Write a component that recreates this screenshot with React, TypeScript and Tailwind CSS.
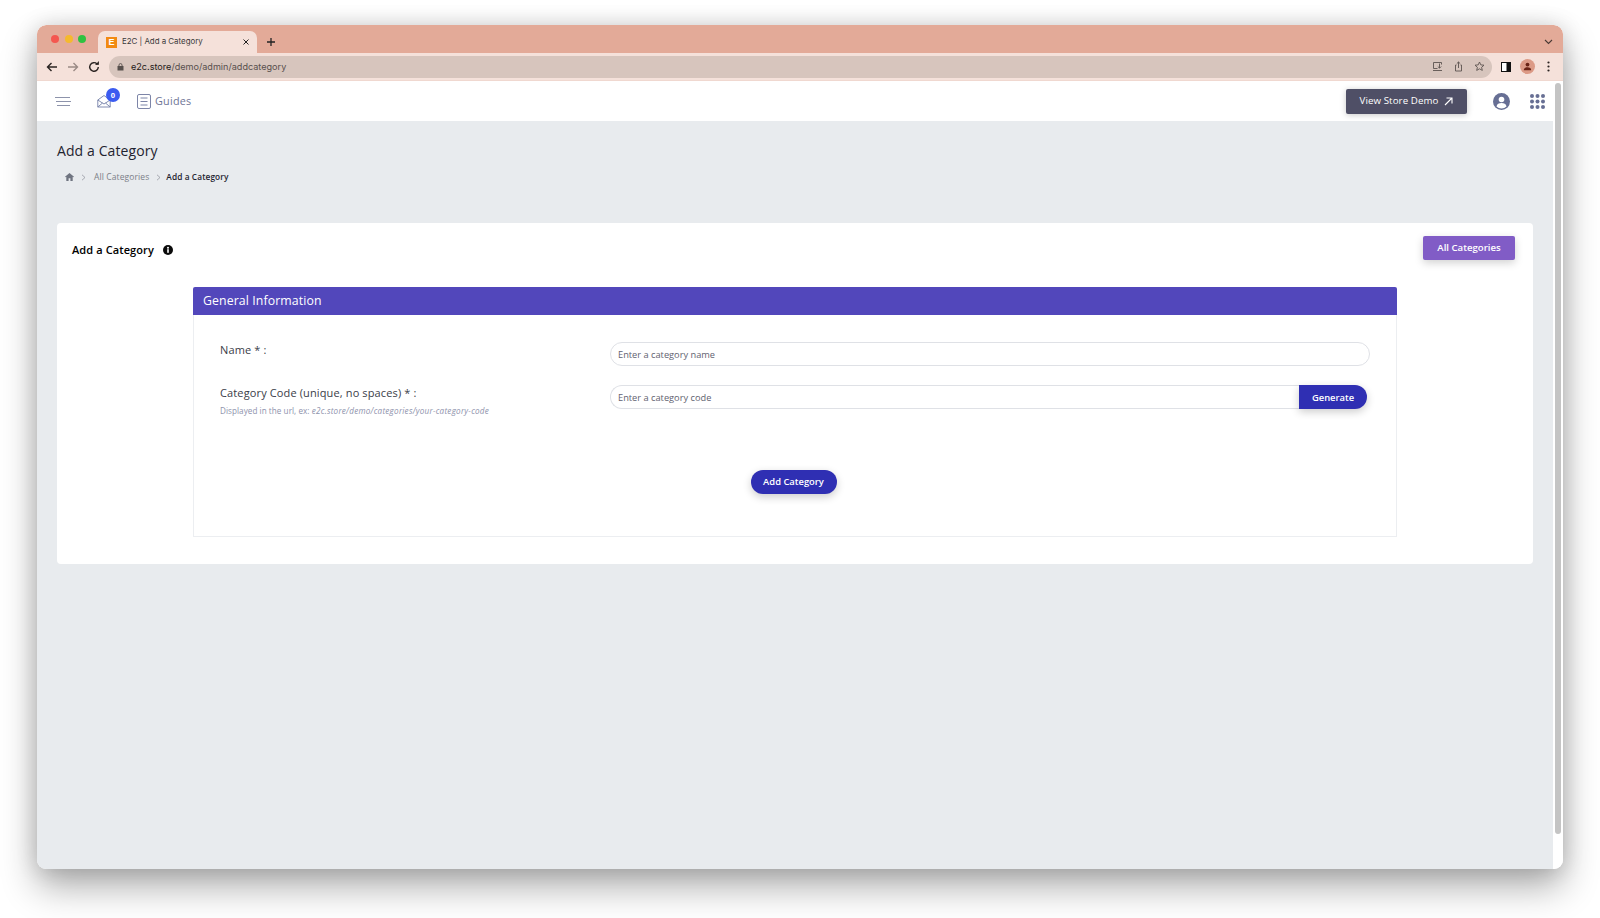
import React from "react";

const Traffic = ({ c }: { c: string }) => <span className="w-2 h-2 rounded-full" style={{ background: c }} />;

function ChromeBars() {
  return (
    <>
      <div className="h-[28px] bg-[#e3aa98] flex items-end shrink-0 rounded-t-[9px]">
        <div className="flex items-center gap-[5.5px] pl-[14px] pr-[12px] self-start pt-[10px]">
          <Traffic c="#f4574f" />
          <Traffic c="#f5b92d" />
          <Traffic c="#2fc240" />
        </div>
        <div className="w-[159px] h-[22px] bg-[#f5e1da] rounded-t-[7px] flex items-center pl-[8px] pr-[7px] font-['Inter',sans-serif] text-[7.9px] text-[#3a3a3a]">
          <span className="w-[11px] h-[11px] bg-[#f28a12] text-white text-[9px] font-bold leading-[11px] text-center font-['Liberation_Sans',sans-serif]">E</span>
          <span className="ml-[5px] flex-1">E2C | Add a Category</span>
          <svg width="8" height="8" viewBox="0 0 8 8" stroke="#222" strokeWidth="1"><path d="M1.500 1.500l5 5M6.500 1.500l-5 5" /></svg>
        </div>
        <svg className="ml-[8px] mb-[5px]" width="12" height="12" viewBox="0 0 12 12" stroke="#222" strokeWidth="1.3"><path d="M6 2v8M2 6h8" /></svg>
        <svg className="ml-auto mr-[10px] mb-[8px]" width="9" height="6" viewBox="0 0 9 6" fill="none" stroke="#4b3a35" strokeWidth="1.1"><path d="M1 1l3.500 3.500L8 1" /></svg>
      </div>
      <div className="h-[28px] bg-[#f5e1da] flex items-center shrink-0 border-b border-b-[#f0d8d0] pl-[8px] pr-[11px]">
        <svg width="14" height="14" viewBox="0 0 14 14" fill="none" stroke="#2b2422" strokeWidth="1.4"><path d="M12 7H2.500M6.500 3L2.500 7l4 4" /></svg>
        <svg className="ml-[7px]" width="14" height="14" viewBox="0 0 14 14" fill="none" stroke="#9a8a85" strokeWidth="1.4"><path d="M2 7h9.500M7.500 3l4 4-4 4" /></svg>
        <svg className="ml-[7px]" width="14" height="14" viewBox="0 0 14 14" fill="none" stroke="#2b2422" strokeWidth="1.4"><path d="M11.300 7a4.300 4.300 0 1 1-1.300-3.100" /><path d="M11.500 1.500v3h-3" fill="#2b2422" strokeWidth="0.8" /></svg>
        <div className="ml-[8px] h-[22px] w-[1383px] bg-[#d7c5bd] rounded-full flex items-center pl-[8px] pr-[7px] font-['Inter',sans-serif] text-[9.1px] text-[#57504d]">
          <svg width="7" height="8" viewBox="0 0 7 8" fill="#57504d"><path d="M1.500 3V2.200a2 2 0 0 1 4 0V3H6.500v4.500h-6V3zM2.400 3h2.200V2.200a1.100 1.100 0 0 0-2.200 0z" /></svg>
          <span className="ml-[7px]"><span className="text-[#1f1a18]">e2c.store</span>/demo/admin/addcategory</span>
          <span className="ml-auto flex items-center gap-[10px]">
            <svg width="11" height="11" viewBox="0 0 11 11" fill="none" stroke="#5c5350" strokeWidth="0.9"><path d="M9.500 3.500V1.500h-8v6h4M7.500 2.500v4.500M5.800 5.500L7.500 7.200l1.700-1.700M1 9.500h9" /></svg>
            <svg width="11" height="11" viewBox="0 0 11 11" fill="none" stroke="#5c5350" strokeWidth="0.9"><path d="M3.500 4H2.500v6h6V4h-1M5.500 7V1M3.800 2.600L5.500 1l1.700 1.600" /></svg>
            <svg width="11" height="11" viewBox="0 0 11 11" fill="none" stroke="#5c5350" strokeWidth="0.9"><path d="M5.500 1l1.300 2.900 3.200.3-2.400 2.100.7 3.100-2.800-1.600-2.800 1.600.7-3.100L1 4.200l3.200-.3z" /></svg>
          </span>
        </div>
        <svg className="ml-[9px]" width="10" height="10" viewBox="0 0 10 10"><rect x=".5" y=".5" width="9" height="9" fill="#fff" stroke="#111" /><rect x="5.500" y="0" width="4.500" height="10" fill="#111" /></svg>
        <span className="ml-[9px] w-[15px] h-[15px] rounded-full bg-[#dc9a86] flex items-center justify-center">
          <svg width="9" height="9" viewBox="0 0 9 9" fill="#6b2416"><circle cx="4.500" cy="2.600" r="1.900" /><path d="M.8 8.200c0-2 1.600-2.900 3.700-2.900s3.700.9 3.700 2.900z" /></svg>
        </span>
        <svg className="ml-[12px]" width="3" height="11" viewBox="0 0 3 11" fill="#2b2422"><circle cx="1.500" cy="1.500" r="1.100" /><circle cx="1.500" cy="5.500" r="1.100" /><circle cx="1.500" cy="9.500" r="1.100" /></svg>
      </div>
    </>
  );
}

function TopNav() {
  return (
    <div className="h-[40px] bg-white flex items-center shrink-0 pl-[18px] pr-[8px]">
      <svg width="16" height="9" viewBox="0 0 16 9" stroke="#8d93ab" strokeWidth="1"><path d="M0 .5h15M1 4.500h15M2 8.500h13" /></svg>
      <span className="relative ml-[26px] w-[18px] h-[14px]">
        <svg width="14" height="14" viewBox="0 0 14 14" fill="none" stroke="#7480a8" strokeWidth="0.9"><path d="M.8 6L7 1.500 13.200 6v7H.8zM.8 6L7 10l6.200-4M.8 13l4.700-4M13.200 13L8.500 9" /></svg>
        <span className="absolute -top-[6px] left-[9px] w-[14px] h-[14px] rounded-full bg-[#3b5bf0] text-white text-[7.500px] font-bold leading-[14px] text-center">0</span>
      </span>
      <svg className="ml-[22px]" width="14" height="15" viewBox="0 0 14 15" fill="none" stroke="#7d85a8" strokeWidth="1"><rect x=".5" y=".5" width="13" height="14" rx="1.500" /><path d="M3.500 4h7M3.500 7.500h7M3.500 11h7" /></svg>
      <span className="ml-[4px] text-[10.800px] text-[#6e7596] tracking-[0.25px] pt-px">Guides</span>
      <a className="ml-auto h-[25px] w-[121px] bg-[#4f4f66] rounded-[2px] shadow-[0_1px_6px_rgba(0,0,0,0.22)] text-white text-[9.700px] font-medium flex items-center justify-center gap-[6px] tracking-[0.1px]">
        <span className="pt-px">View Store Demo</span>
        <svg width="9" height="9" viewBox="0 0 9 9" fill="none" stroke="#fff" strokeWidth="1.100"><path d="M1 8l7-7M2.500 1H8v5.500" /></svg>
      </a>
      <svg className="ml-[26px]" width="17" height="17" viewBox="0 0 17 17"><circle cx="8.500" cy="8.500" r="8.500" fill="#676f94" /><circle cx="8.500" cy="6.500" r="2.800" fill="#fff" /><path d="M3.500 13.500c.5-2.400 2.400-3.400 5-3.400s4.500 1 5 3.400a7 7 0 0 1-10 0z" fill="#fff" /></svg>
      <svg className="ml-[20px]" width="15" height="15" viewBox="0 0 15 15" fill="#676f94">
        {[2, 7.5, 13].map((y) => [2, 7.5, 13].map((x) => <circle key={`${x}-${y}`} cx={x} cy={y} r="2" />))}
      </svg>
    </div>
  );
}

function Content() {
  return (
    <div className="flex-1 min-h-0 bg-[#e8ebee] px-[20px] pt-[20px]">
      <h1 className="text-[14px] font-medium text-[#1f2430] leading-[20px] tracking-[0.1px]">Add a Category</h1>
      <div className="flex items-center pl-[8px] mt-[8px] h-[16px] text-[8.500px] text-[#7c7f88] tracking-[0.1px]">
        <svg width="9" height="8" viewBox="0 0 9 8" fill="#6f7480"><path d="M4.500 0L0 3.800l.5.5.8-.6V8h2.300V5.300h1.800V8h2.300V3.700l.8.6.5-.5z" /></svg>
        <svg className="ml-[7px]" width="5" height="7" viewBox="0 0 5 7" fill="none" stroke="#8a8d96" strokeWidth="0.7"><path d="M1 .8l3 2.700-3 2.700" /></svg>
        <span className="ml-[8px]">All Categories</span>
        <svg className="ml-[7px]" width="5" height="7" viewBox="0 0 5 7" fill="none" stroke="#8a8d96" strokeWidth="0.7"><path d="M1 .8l3 2.700-3 2.700" /></svg>
        <span className="ml-[5px] text-[8.300px] font-semibold text-[#1f2430]">Add a Category</span>
      </div>
      <div className="mt-[38px] bg-white rounded-[4px] h-[341px] pt-[13px] px-[15px]">
        <div className="flex items-start justify-between pr-[3px]">
          <div className="flex items-center h-[28px] text-[11px] font-semibold text-black tracking-[0.1px]">
            Add a Category
            <svg className="ml-[9px]" width="10" height="10" viewBox="0 0 10 10"><circle cx="5" cy="5" r="5" fill="#0b0b0b" /><rect x="4.200" y="4.200" width="1.600" height="3.600" fill="#fff" /><circle cx="5" cy="2.700" r="1" fill="#fff" /></svg>
          </div>
          <button className="w-[92px] h-[24px] pt-px bg-[#815cc6] rounded-[2px] text-white text-[9.600px] font-semibold shadow-[0_3px_8px_rgba(0,0,0,0.18)]">All Categories</button>
        </div>
        <div className="mx-[121px] mt-[23px]">
          <div className="h-[28px] bg-[#5247bb] rounded-t-[2px] text-white text-[12.300px] font-medium flex items-center pl-[10px] tracking-[0.1px]">General Information</div>
          <div className="h-[222px] border border-t-0 border-[#eceef1] pt-[27px] pl-[26px] pr-[26px]">
            <div className="flex">
              <label className="w-[390px] text-[11px] text-[#3a3d48] leading-[15px] tracking-[0.15px]">Name * :</label>
              <div className="flex-1 h-[24px] pt-px border border-[#dfe1e6] rounded-full pl-[7px] flex items-center text-[9.250px] text-[#5f6270]">Enter a category name</div>
            </div>
            <div className="flex mt-[19px]">
              <div className="w-[390px]">
                <div className="text-[11px] text-[#3a3d48] leading-[15px] tracking-[0.13px]">Category Code (unique, no spaces) * :</div>
                <div className="mt-[6px] text-[8.150px] text-[#8e92ac] leading-[10px] tracking-[0.05px]">Displayed in the url, ex: <i className="tracking-[0.24px]">e2c.store/demo/categories/your-category-code</i></div>
              </div>
              <div className="flex-1 flex h-[24px] pr-[3px]">
                <div className="flex-1 pt-px border border-[#dfe1e6] border-r-0 rounded-l-full pl-[7px] flex items-center text-[9.250px] text-[#5f6270]">Enter a category code</div>
                <button className="w-[68px] pt-[2px] bg-[#2f2fb3] rounded-r-full text-white text-[9.400px] font-semibold shadow-[0_3px_8px_rgba(0,0,0,0.2)]">Generate</button>
              </div>
            </div>
            <div className="flex justify-center mt-[54px] pr-[3px]">
              <button className="w-[86px] h-[24px] pt-px bg-[#2f2fb3] rounded-full text-white text-[9.400px] font-semibold shadow-[0_3px_8px_rgba(0,0,0,0.2)]">Add Category</button>
            </div>
          </div>
        </div>
      </div>
    </div>
  );
}

export default function App() {
  return (
    <div className="w-[1600px] h-[918px] bg-white pt-[25px] pl-[37px] overflow-hidden font-['Open_Sans',sans-serif]">
      <div className="w-[1526px] h-[844px] rounded-[9px] flex flex-col bg-white shadow-[0_18px_36px_rgba(0,0,0,0.32),0_0_22px_rgba(0,0,0,0.14)] overflow-hidden">
        <ChromeBars />
        <div className="flex-1 min-h-0 flex">
          <div className="flex-1 min-w-0 flex flex-col">
            <TopNav />
            <Content />
          </div>
          <div className="w-[10px] bg-white flex justify-center pt-[2px] pb-[35px]">
            <div className="w-[6px] h-full bg-[#c4c4c4] rounded-full" />
          </div>
        </div>
      </div>
    </div>
  );
}
